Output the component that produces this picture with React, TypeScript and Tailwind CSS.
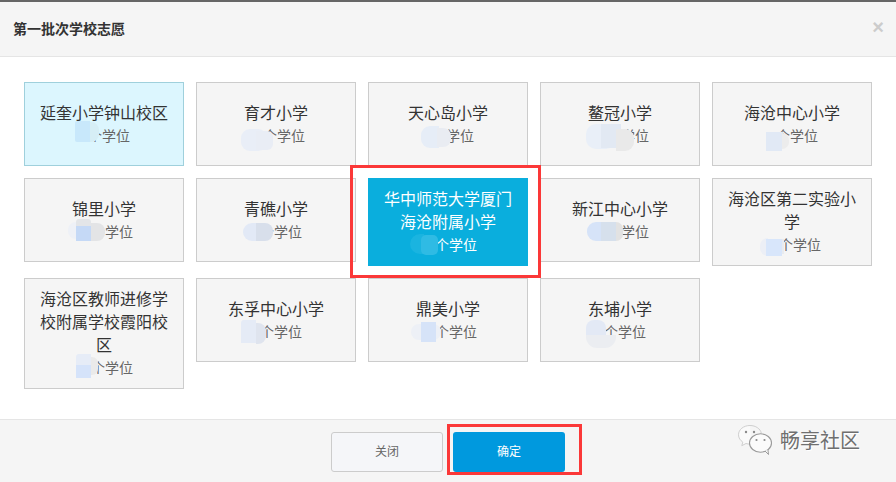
const cjk = "font-['Liberation_Sans','Noto_Sans_CJK_SC',sans-serif]";

type School = {
  lines: string;
  spacer: string;
  blob: string[];
  box?: string;
  sub?: string;
};

const schools: School[] = [
  {
    lines: "延奎小学钟山校区",
    spacer: "w-[10px]",
    box: "border-[#9fd0dc] bg-[#dcf6fe] text-[#333333]",
    blob: [
      "left-[50px] top-[38px] h-[21px] w-[15px] rounded-l-[2px] bg-[#c8e8fb]",
      "left-[65px] top-[39px] h-[20px] w-[9px] rounded-r-[8px] bg-[#d6eef5]",
    ],
  },
  {
    lines: "育才小学",
    spacer: "w-[16px]",
    blob: [
      "left-[44px] top-[46px] h-[22px] w-[26px] rounded-[9px] bg-[#e9eef7]",
      "left-[59px] top-[48px] h-[19px] w-[17px] rounded-r-[6px] bg-[#e9edf5]",
    ],
  },
  {
    lines: "天心岛小学",
    spacer: "w-[10px]",
    blob: [
      "left-[52px] top-[43px] h-[22px] w-[18px] rounded-l-[9px] bg-[#e6edf7]",
      "left-[68px] top-[45px] h-[19px] w-[14px] rounded-r-[8px] bg-[#e9ecf2]",
    ],
  },
  {
    lines: "鳌冠小学",
    spacer: "w-[16px]",
    blob: [
      "left-[45px] top-[41px] h-[25px] w-[30px] rounded-[10px] bg-[#e9eff8]",
      "left-[60px] top-[41px] h-[24px] w-[20px] bg-[#e2e9f3]",
      "left-[75px] top-[46px] h-[22px] w-[18px] rounded-r-[9px] bg-[#e9e9e9]",
    ],
  },
  {
    lines: "海沧中心小学",
    spacer: "w-[10px]",
    blob: [
      "left-[53px] top-[49px] h-[19px] w-[16px] bg-[#e1e9f5]",
      "left-[69px] top-[50px] h-[16px] w-[7px] rounded-r-[8px] bg-[#ececec]",
    ],
  },
  {
    lines: "锦里小学",
    spacer: "w-[16px]",
    blob: [
      "left-[43px] top-[43px] h-[17px] w-[10px] rounded-l-[8px] bg-[#eef1f7]",
      "left-[51px] top-[47px] h-[15px] w-[15px] bg-[#c5d9f6]",
      "left-[51px] top-[40px] h-[7px] w-[15px] rounded-t-[3px] bg-[#e3e5e8]",
      "left-[66px] top-[44px] h-[18px] w-[14px] rounded-r-[8px] bg-[#e3e4e6]",
    ],
  },
  {
    lines: "青礁小学",
    spacer: "w-[10px]",
    blob: [
      "left-[46px] top-[44px] h-[18px] w-[13px] rounded-l-[9px] bg-[#e2e9f6]",
      "left-[59px] top-[44px] h-[18px] w-[17px] rounded-r-[8px] bg-[#d8dfeb]",
    ],
  },
  {
    lines: "华中师范大学厦门 海沧附属小学",
    spacer: "w-[16px]",
    box: "border-[#0aaedd] bg-[#0aaedd] text-white",
    sub: "text-white",
    blob: [
      "left-[41px] top-[55px] h-[20px] w-[14px] rounded-l-[10px] bg-[#1ab4e0]",
      "left-[52px] top-[56px] h-[20px] w-[17px] rounded-[5px] bg-[#2fbbe4]",
    ],
  },
  {
    lines: "新江中心小学",
    spacer: "w-[16px]",
    blob: [
      "left-[46px] top-[43px] h-[19px] w-[14px] rounded-l-[9px] bg-[#d6e3f8]",
      "left-[60px] top-[43px] h-[19px] w-[15px] bg-[#d6e0ec]",
      "left-[75px] top-[43px] h-[19px] w-[7px] rounded-r-[8px] bg-[#e2e2e2]",
    ],
  },
  {
    lines: "海沧区第二实验小学",
    spacer: "w-[16px]",
    blob: [
      "left-[47px] top-[59px] h-[18px] w-[8px] rounded-l-[8px] bg-[#eceff6]",
      "left-[53px] top-[60px] h-[17px] w-[16px] bg-[#d8e6fb]",
      "left-[69px] top-[60px] h-[15px] w-[2px] bg-[#e8ebf0]",
    ],
  },
  {
    lines: "海沧区教师进修学校附属学校霞阳校区",
    spacer: "w-[16px]",
    blob: [
      "left-[51px] top-[75px] h-[11px] w-[15px] rounded-tl-[3px] bg-[#e6ecf7]",
      "left-[51px] top-[86px] h-[13px] w-[15px] bg-[#d5e3fa]",
      "left-[66px] top-[78px] h-[18px] w-[7px] rounded-r-[6px] bg-[#eaeaea]",
    ],
  },
  {
    lines: "东孚中心小学",
    spacer: "w-[10px]",
    blob: [
      "left-[44px] top-[41px] h-[23px] w-[15px] rounded-tl-[3px] bg-[#e5ebf6]",
      "left-[59px] top-[44px] h-[21px] w-[10px] rounded-r-[8px] bg-[#dfe4ee]",
    ],
  },
  {
    lines: "鼎美小学",
    spacer: "w-[16px]",
    blob: [
      "left-[42px] top-[45px] h-[16px] w-[30px] rounded-[8px] bg-[#edf0f6]",
      "left-[52px] top-[43px] h-[20px] w-[15px] bg-[#d6e3f8]",
    ],
  },
  {
    lines: "东埔小学",
    spacer: "w-[10px]",
    blob: [
      "left-[45px] top-[41px] h-[15px] w-[20px] rounded-t-[8px] bg-[#e3e9f5]",
      "left-[45px] top-[56px] h-[13px] w-[30px] rounded-b-[11px] bg-[#ebedf1]",
    ],
  },
];

function Card({ s }: { s: School }) {
  return (
    <div
      className={`relative flex min-h-[84px] flex-col justify-center border px-[12px] py-[9px] text-center text-[16px] leading-[23px] ${
        s.box ?? "border-[#cccccc] bg-[#f5f5f5] text-[#333333]"
      }`}
    >
      {s.lines.split(" ").map((l) => (
        <div key={l}>{l}</div>
      ))}
      <div className={`text-[14px] leading-[22px] ${s.sub ?? "text-[#666666]"}`}>
        <span className={`inline-block ${s.spacer}`} />
        个学位
      </div>
      {s.blob.map((b) => (
        <div key={b} className={`absolute ${b}`} />
      ))}
    </div>
  );
}

function WeChat() {
  return (
    <svg width="36" height="34" viewBox="0 0 36 34" className="shrink-0">
      <path
        d="M13 1.5C6.6 1.5 1.5 5.6 1.5 10.8c0 3 1.7 5.6 4.3 7.3l-1 3.6 4.2-2.2c1.3.4 2.6.6 4 .6.6 0 1 0 1.6-.1"
        fill="#fafafa"
        stroke="#cfcfcf"
        strokeWidth="1"
      />
      <path
        d="M13 1.5c5.6 0 10.4 3.2 11.3 7.7"
        fill="none"
        stroke="#cfcfcf"
        strokeWidth="1"
      />
      <ellipse cx="23.5" cy="19" rx="11" ry="9.2" fill="#fbfbfb" stroke="#9a9a9a" strokeWidth="1.1" />
      <path d="M28 27l3.5 3.5-.6-5" fill="#fbfbfb" stroke="#9a9a9a" strokeWidth="1" />
      <circle cx="9" cy="8" r="1.2" fill="#8a8a8a" />
      <circle cx="17" cy="8" r="1.2" fill="#8a8a8a" />
      <circle cx="19.5" cy="16" r="1.1" fill="#8a8a8a" />
      <circle cx="27.5" cy="16" r="1.1" fill="#8a8a8a" />
    </svg>
  );
}

export default function App() {
  return (
    <div className={`relative flex h-[482px] w-[896px] flex-col overflow-hidden bg-white ${cjk}`}>
      <div className="h-[2px] shrink-0 bg-[#666666]" />
      <header className="flex h-[55px] shrink-0 items-center justify-between border-b border-[#e5e5e5] bg-[#f5f5f5] pl-[13px] pr-[12px]">
        <h1 className="text-[14px] font-bold text-[#333333]">第一批次学校志愿</h1>
        <span className="mb-[4px] text-[20px] font-bold leading-none text-[#cccccc]">×</span>
      </header>
      <main className="grid flex-1 grid-cols-[repeat(5,160px)] content-start items-start gap-[12px] pl-[24px] pt-[25px]">
        {schools.map((s) => (
          <Card key={s.lines} s={s} />
        ))}
      </main>
      <footer className="flex h-[63px] shrink-0 items-start justify-center gap-[10px] border-t border-[#e5e5e5] bg-[#f5f5f5] pt-[12px]">
        <button className="h-[40px] w-[112px] rounded-[3px] border border-[#cccccc] bg-[#f5f6f9] text-[12px] text-[#666666]">
          关闭
        </button>
        <button className="h-[40px] w-[112px] rounded-[3px] bg-[#0099de] text-[12px] text-white">确定</button>
      </footer>

      <div className="pointer-events-none absolute left-[350px] top-[165px] h-[113px] w-[191px] border-[3px] border-[#fb3838]" />
      <div className="pointer-events-none absolute left-[447px] top-[424px] h-[51px] w-[135px] border-[3px] border-[#fb3838]" />
      <div className="absolute left-[737px] top-[424px] flex items-center gap-[7px]">
        <WeChat />
        <span className="text-[20px] leading-none text-[#6f6f6f] [text-shadow:1px_1px_0_#ffffff]">畅享社区</span>
      </div>
    </div>
  );
}
